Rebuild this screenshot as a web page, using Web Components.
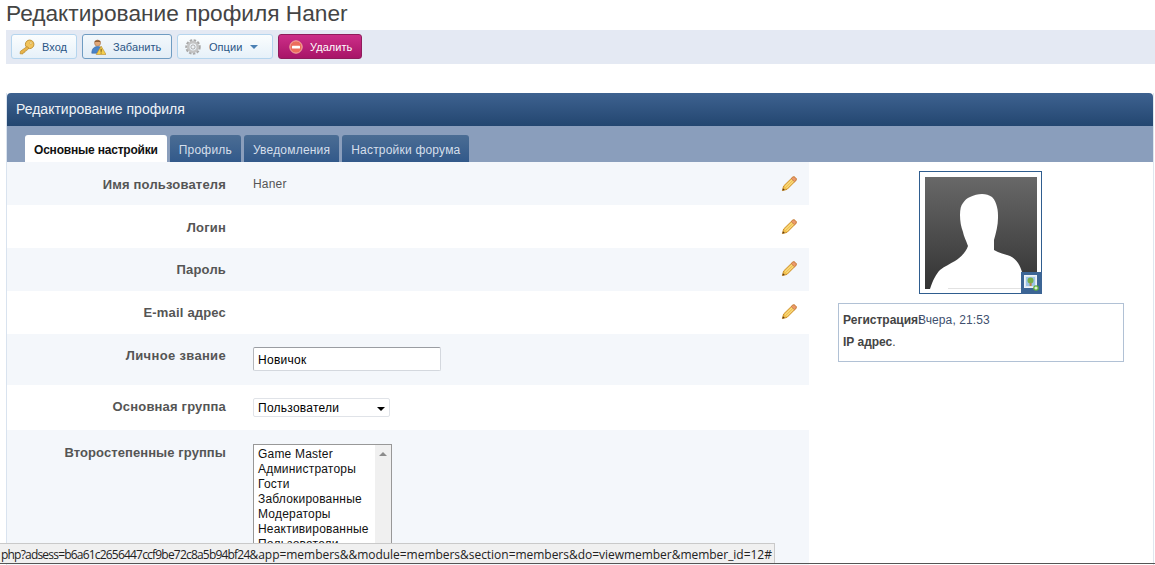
<!DOCTYPE html>
<html lang="ru">
<head>
<meta charset="utf-8">
<title>Редактирование профиля Haner</title>
<style>
  html, body { margin: 0; padding: 0; background: #fff; overflow: hidden; }
  body { font-family: "Liberation Sans", Arial, sans-serif; }
</style>
</head>
<body>

<profile-page>
  <page-toolbar slot="toolbar">
    <tool-button icon="key" style="width:66px">Вход</tool-button>
    <tool-button icon="ban" style="width:90px" pressed>Забанить</tool-button>
    <tool-button icon="gear" style="width:96px;gap:8px" caret>Опции</tool-button>
    <tool-button icon="minus" style="width:84px" danger>Удалить</tool-button>
  </page-toolbar>

  <tab-bar slot="tabs">
    <tab-item active>Основные настройки</tab-item>
    <tab-item>Профиль</tab-item>
    <tab-item>Уведомления</tab-item>
    <tab-item>Настройки форума</tab-item>
  </tab-bar>

  <form-row slot="rows" label="Имя пользователя" size="43" top="15" shaded editable>Haner</form-row>
  <form-row slot="rows" label="Логин" size="43" top="15" editable></form-row>
  <form-row slot="rows" label="Пароль" size="43" top="14" shaded editable></form-row>
  <form-row slot="rows" label="E-mail адрес" size="43" top="14" editable></form-row>
  <form-row slot="rows" label="Личное звание" size="51" top="13" style="--ls:.33px" shaded control>
    <text-box>Новичок</text-box>
  </form-row>
  <form-row slot="rows" label="Основная группа" size="45" top="13" control>
    <drop-box>Пользователи</drop-box>
  </form-row>
  <form-row slot="rows" label="Второстепенные группы" size="135" top="14" style="--ls:.08px" shaded control>
    <list-box>
      <div>Game Master</div>
      <div>Администраторы</div>
      <div>Гости</div>
      <div>Заблокированные</div>
      <div>Модераторы</div>
      <div>Неактивированные</div>
      <div>Пользователи</div>
    </list-box>
  </form-row>

  <member-card slot="side"></member-card>
</profile-page>

<status-tip><span style="letter-spacing:-.8px">php?adsess=b6a61c2656447ccf9be72c8a5b94bf24</span>&amp;app=members&amp;&amp;module=members&amp;section=members&amp;do=viewmember&amp;member_id=12#</status-tip>

<script>
const ICONS = {
  key: `<svg width="16" height="16" viewBox="0 0 18 18">
    <circle cx="12" cy="6" r="4.8" fill="#f2c45c" stroke="#b98a2c"/>
    <circle cx="13.4" cy="4.6" r="1.3" fill="#fff3c4" stroke="#c79a3c" stroke-width=".6"/>
    <path d="M9 8.5 1.6 13.8l-.4 2.8 3.2.2.6-1.7 1.7-.2.4-1.6 1.7-.3 2.4-2.8z" fill="#e9b44a" stroke="#b98a2c" stroke-width=".8"/>
  </svg>`,
  ban: `<svg width="16" height="16" viewBox="0 0 18 18">
    <circle cx="8.5" cy="4.6" r="3.4" fill="#e3a878" stroke="#9b6a40" stroke-width=".6"/>
    <path d="M5 3.6C5.4 1 11.6 .8 12 3.6 10 3 7 3 5 3.6z" fill="#7a4a24"/>
    <path d="M2 16c0-5 2.6-7.5 6.5-7.5S14 10 14 16z" fill="#4a84c8" stroke="#2f5f9a" stroke-width=".6"/>
    <path d="M12.5 8 18 17.4H7z" fill="#f5cf4f" stroke="#b98a2c" stroke-width=".7"/>
    <path d="M12.5 11v3.4M12.5 15.3v1" stroke="#5a4210" stroke-width="1"/>
  </svg>`,
  gear: `<svg width="16" height="16" viewBox="0 0 18 18">
    <circle cx="9" cy="9" r="7" fill="none" stroke="#a8a8a8" stroke-width="3.4" stroke-dasharray="2.6 1.5"/>
    <circle cx="9" cy="9" r="5.4" fill="none" stroke="#c4c4c4" stroke-width="3"/>
    <circle cx="9" cy="9" r="2.4" fill="#eef1f4" stroke="#8f8f8f" stroke-width=".8"/>
  </svg>`,
  minus: `<svg width="14" height="14" viewBox="0 0 14 14">
    <circle cx="7" cy="7" r="6.2" fill="#ec6d5c" stroke="#f4b0a4"/>
    <rect x="3" y="5.8" width="8" height="2.6" rx=".5" fill="#fff"/>
  </svg>`
};

// toolbar under the page title
class PageToolbar extends HTMLElement {
  constructor() {
    super();
    this.attachShadow({ mode: "open" });
    this.shadowRoot.innerHTML = `
      <style>
        :host { display: flex; gap: 5px; padding: 4px 5px 5px; background: #e4e9f3; height: 25px; }
      </style>
      <slot></slot>`;
  }
}

class ToolButton extends HTMLElement {
  constructor() {
    super();
    this.attachShadow({ mode: "open" });
    const icon = ICONS[this.getAttribute("icon")] || "";
    const caret = this.hasAttribute("caret") ? `<span class="caret"></span>` : "";
    this.shadowRoot.innerHTML = `
      <style>
        :host {
          display: flex; align-items: center; flex: none; box-sizing: border-box; height: 25px;
          padding: 0 0 0 7px; gap: 7px; border: 1px solid #b5d5ee; border-radius: 3px;
          background: linear-gradient(#fbfdfe, #e6f1f9); color: #2a5585;
          font: 11px "Liberation Sans", Arial, sans-serif; letter-spacing: .05px; white-space: nowrap;
        }
        :host([pressed]) { border-color: #6f9cc2; background: linear-gradient(#f3f8fc, #e2edf6); }
        :host([danger]) {
          border-color: #8f1d5c; background: linear-gradient(#cc2e88, #a81568); color: #fff;
          padding: 0 0 0 10px; gap: 7px;
        }
        svg { display: block; flex: none; }
        .caret { width: 0; height: 0; border: 4px solid transparent; border-top: 4px solid #4a80b4; border-bottom: 0; }
      </style>
      ${icon}<span><slot></slot></span>${caret}`;
  }
}

class TabBar extends HTMLElement {
  constructor() {
    super();
    this.attachShadow({ mode: "open" });
    this.shadowRoot.innerHTML = `
      <style>
        :host { display: flex; gap: 3px; padding: 9px 0 0 18px; height: 27px; background: #8a9ebc; }
      </style>
      <slot></slot>`;
  }
}

class TabItem extends HTMLElement {
  constructor() {
    super();
    this.attachShadow({ mode: "open" });
    this.shadowRoot.innerHTML = `
      <style>
        :host {
          display: block; height: 27px; padding: 0 9px; border-radius: 3px 3px 0 0;
          background: linear-gradient(#4b6d94, #32598a); color: #d5dfeb;
          font: 12px/30px "Liberation Sans", Arial, sans-serif; letter-spacing: .2px; white-space: nowrap;
        }
        :host([active]) { background: #fff; color: #111; font-weight: bold; letter-spacing: -.2px; }
      </style>
      <slot></slot>`;
  }
}

class FormRow extends HTMLElement {
  constructor() {
    super();
    this.attachShadow({ mode: "open" });
    const pencil = this.hasAttribute("editable") ? `
      <svg class="pen" width="16" height="16" viewBox="0 0 16 16">
        <path d="M1.4 14.6 2.6 10 11.4 1.4c.8-.7 1.9-.7 2.6 0l.7.7c.7.7.7 1.8 0 2.6L6 13.4z" fill="#f2c24f" stroke="#c98a24" stroke-width=".9"/>
        <path d="M4 10.6 12 2.8M5.6 12 13.4 4.2" stroke="#fbe59a" stroke-width="1"/>
        <path d="M11.4 1.4c.8-.7 1.9-.7 2.6 0l.7.7c.7.7.7 1.8 0 2.6l-1.2 1.1-3.3-3.3z" fill="#eb9a6c" stroke="#c0703c" stroke-width=".7"/>
        <path d="M1.4 14.6 2 12.2l1.8 1.8z" fill="#5a3a18"/>
      </svg>` : "";
    this.shadowRoot.innerHTML = `
      <style>
        :host {
          display: grid; grid-template-columns: 219px 1fr 28px; column-gap: 27px; box-sizing: border-box;
          height: ${this.getAttribute("size")}px; padding-top: ${this.getAttribute("top")}px; background: #fff; overflow: hidden;
          font: 12px "Liberation Sans", Arial, sans-serif; color: #555;
        }
        :host([shaded]) { background: #f4f7fb; }
        :host([control]) .label { margin-top: 1px; }
        .label { text-align: right; font-weight: bold; font-size: 13px; line-height: 15px; color: #555; letter-spacing: var(--ls, .18px); }
        .value { line-height: 15px; letter-spacing: .2px; min-width: 0; }
        .pen { display: block; margin-top: -1px; }
      </style>
      <div class="label">${this.getAttribute("label")}</div>
      <div class="value"><slot></slot></div>
      <div>${pencil}</div>`;
  }
}

class TextBox extends HTMLElement {
  constructor() {
    super();
    this.attachShadow({ mode: "open" });
    this.shadowRoot.innerHTML = `
      <style>
        :host {
          display: block; box-sizing: border-box; width: 188px; height: 24px; padding: 0 4px; background: #fff;
          border: 1px solid #d4d8de; border-top-color: #9a9da2; border-left-color: #b4b7bc; border-radius: 2px;
          font: 12px/25px "Liberation Sans", Arial, sans-serif; color: #000; letter-spacing: .28px;
        }
      </style>
      <slot></slot>`;
  }
}

class DropBox extends HTMLElement {
  constructor() {
    super();
    this.attachShadow({ mode: "open" });
    this.shadowRoot.innerHTML = `
      <style>
        :host {
          display: flex; align-items: center; justify-content: space-between; box-sizing: border-box;
          width: 137px; height: 19px; padding: 0 4px; background: #fff; border: 1px solid #e0e3e8; border-radius: 2px;
          font: 12px "Liberation Sans", Arial, sans-serif; color: #000; letter-spacing: .25px;
        }
        i { width: 0; height: 0; border: 4px solid transparent; border-top: 4px solid #000; border-bottom: 0; margin-top: 2px; }
      </style>
      <span><slot></slot></span><i></i>`;
  }
}

class ListBox extends HTMLElement {
  constructor() {
    super();
    this.attachShadow({ mode: "open" });
    this.shadowRoot.innerHTML = `
      <style>
        :host {
          display: grid; grid-template-columns: 1fr 16px; box-sizing: border-box; width: 139px; height: 120px;
          background: #fff; border: 1px solid #989898;
          font: 12px/15px "Liberation Sans", Arial, sans-serif; color: #111; letter-spacing: .2px;
        }
        .items { padding: 2px 4px 0; overflow: hidden; white-space: nowrap; }
        .bar { background: #f0f0f0; display: flex; justify-content: center; padding-top: 7px; }
        .bar i { width: 0; height: 0; border: 4px solid transparent; border-bottom: 4px solid #8c8c8c; border-top: 0; }
      </style>
      <div class="items"><slot></slot></div>
      <div class="bar"><i></i></div>`;
  }
}

class MemberCard extends HTMLElement {
  constructor() {
    super();
    this.attachShadow({ mode: "open" });
    this.shadowRoot.innerHTML = `
      <style>
        :host {
          display: flex; flex-direction: column; align-items: center; gap: 9px; padding-top: 9px;
          font: 12px "Liberation Sans", Arial, sans-serif; color: #444;
        }
        .frame { position: relative; box-sizing: border-box; width: 123px; height: 123px; margin-right: 1px; padding: 5px; border: 1px solid #2f5d8f; background: #fff; }
        .frame > svg { display: block; }
        .badge { position: absolute; right: -1px; bottom: -1px; width: 21px; height: 22px; background: #3c6595; }
        .badge svg { display: block; margin: 3px 0 0 3px; }
        .info { box-sizing: border-box; width: 286px; height: 59px; padding: 9px 4px 0; border: 1px solid #b1c1d5; }
        .line { height: 15px; line-height: 15px; margin-bottom: 7px; white-space: nowrap; }
        .line b { display: inline-block; width: 75px; color: #444; }
        .line span { color: #40506e; letter-spacing: .1px; }
        .line b.auto { width: auto; }
      </style>
      <div class="frame">
        <svg width="112" height="112" viewBox="0 0 112 112">
          <defs><linearGradient id="av" x1="0" y1="0" x2="0" y2="1"><stop offset="0" stop-color="#686868"/><stop offset="1" stop-color="#333"/></linearGradient></defs>
          <rect width="112" height="112" fill="url(#av)"/>
          <path d="M5 112C8 103 11 97 15 93 20 89 25 87 30 84 36 80 41 75 43 69 41 63 39 60 38 55 36 50 35 44 35 38 35 32 36 28 38 26 40 23 42 21 45 20 49 18 53 17 57 17 61 17 64 18 67 20 70 23 71 26 72 30 73 34 73 37 73 41 73 48 71 56 69 63 69 66 69 70 69 73 74 76 80 77 85 79 89 81 91 83 93 86 95 89 96 92 97 95L112 95V112Z" fill="#fff"/>
          <rect x="23" y="111" width="73" height="1" fill="#e2e2e2"/>
        </svg>
        <div class="badge">
          <svg width="15" height="16" viewBox="0 0 15 16">
            <rect x=".5" y=".5" width="12" height="12" fill="#dbe7f3" stroke="#eef3f8"/>
            <rect x="2" y="2" width="9" height="9" fill="#9cc4e6"/>
            <circle cx="6.5" cy="5.5" r="3" fill="#78b048"/>
            <rect x="5.6" y="8" width="2" height="3" fill="#b8864a"/>
            <circle cx="12" cy="13" r="2.8" fill="#5fb23c"/>
            <path d="M12 11.4v3.2M10.4 13h3.2" stroke="#fff" stroke-width="1.1"/>
          </svg>
        </div>
      </div>
      <div class="info">
        <div class="line"><b>Регистрация:</b><span>Вчера, 21:53</span></div>
        <div class="line"><b class="auto">IP адрес</b>.</div>
      </div>`;
  }
}

class ProfilePage extends HTMLElement {
  constructor() {
    super();
    this.attachShadow({ mode: "open" });
    this.shadowRoot.innerHTML = `
      <style>
        :host { display: block; height: 565px; overflow: hidden; font-family: "Liberation Sans", Arial, sans-serif; }
        h1 { margin: 0; padding-left: 6px; height: 30px; font-size: 22.7px; line-height: 26px; font-weight: normal; color: #444; white-space: nowrap; }
        .toolbar { margin: 0 0 29px 6px; }
        .panel { margin-left: 6px; margin-right: 1px; height: 472px; border-left: 1px solid #d9e3ef; border-right: 1px solid #dfe6ef; }
        .head {
          height: 33px; box-sizing: border-box; padding-left: 9px; border-radius: 4px 4px 0 0;
          background: linear-gradient(#3e6290, #234670); color: #eef2f7; font-size: 14px; line-height: 33px;
        }
        .body { display: grid; grid-template-columns: 802px 1fr; }
        .body > div { min-width: 0; }
      </style>
      <h1>Редактирование профиля Haner</h1>
      <div class="toolbar"><slot name="toolbar"></slot></div>
      <div class="panel">
        <div class="head">Редактирование профиля</div>
        <slot name="tabs"></slot>
        <div class="body">
          <div><slot name="rows"></slot></div>
          <div><slot name="side"></slot></div>
        </div>
      </div>`;
  }
}

// browser link hint lying over the page bottom
class StatusTip extends HTMLElement {
  constructor() {
    super();
    this.attachShadow({ mode: "open" });
    this.shadowRoot.innerHTML = `
      <style>
        :host {
          position: fixed; left: 0; bottom: 2px; width: 775px; height: 20px; box-sizing: border-box; overflow: hidden;
          background: #f0f0f0; border-top: 1px solid #c9c9c9; border-right: 1px solid #c9c9c9;
          font: 12px/21px "Open Sans", "Liberation Sans", sans-serif; color: #222; white-space: nowrap; padding-left: 1px; letter-spacing: -.03px;
        }
      </style>
      <slot></slot>`;
    const line = document.createElement("div");
    line.style.cssText = "position:fixed;left:0;right:0;bottom:1px;height:1px;background:#555";
    document.body.appendChild(line);
  }
}

customElements.define("page-toolbar", PageToolbar);
customElements.define("tool-button", ToolButton);
customElements.define("tab-bar", TabBar);
customElements.define("tab-item", TabItem);
customElements.define("form-row", FormRow);
customElements.define("text-box", TextBox);
customElements.define("drop-box", DropBox);
customElements.define("list-box", ListBox);
customElements.define("member-card", MemberCard);
customElements.define("profile-page", ProfilePage);
customElements.define("status-tip", StatusTip);
</script>
</body>
</html>
